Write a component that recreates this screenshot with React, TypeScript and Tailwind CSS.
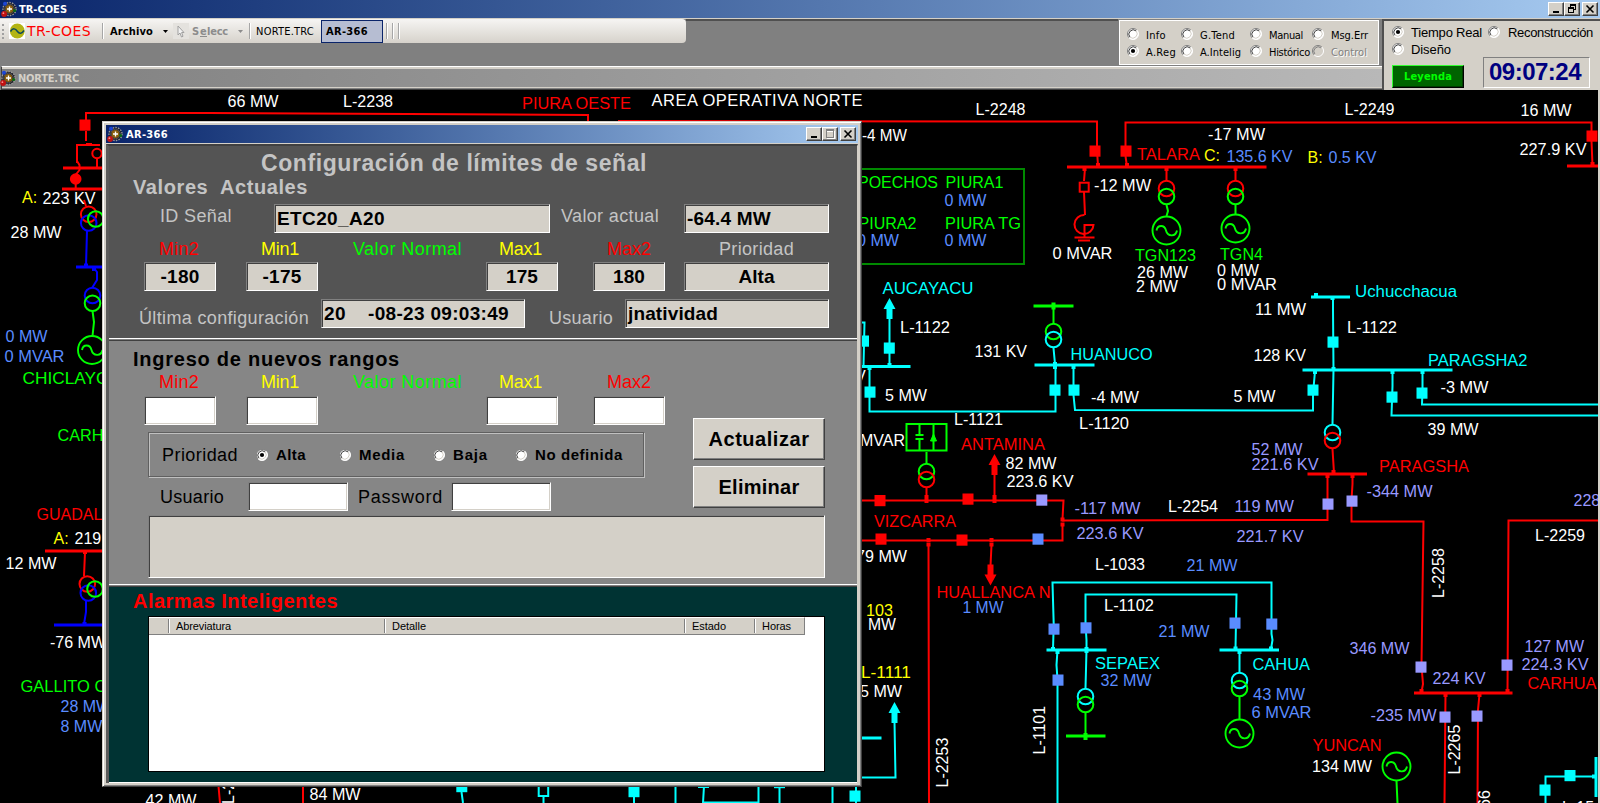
import { useLayoutEffect, useRef, type ReactNode } from "react";

const RED = "#ff0000";
const LIME = "#00ff00";
const CYAN = "#00ffff";
const BLUE = "#0000ff";
const SKY = "#5a8cff";
const LILAC = "#9999ff";
const WHITE = "#ffffff";
const YELLOW = "#ffff00";

/* Text whose tracking is computed so that it fills a given width. */
function Fit({ w, text, className = "" }: { w: number; text: string; className?: string }) {
  const ref = useRef<HTMLSpanElement>(null);
  useLayoutEffect(() => {
    const el = ref.current;
    if (!el) return;
    el.style.letterSpacing = "0px";
    const natural = el.getBoundingClientRect().width;
    el.style.letterSpacing = `${(w - natural) / text.length}px`;
  }, [w, text]);
  return (
    <span ref={ref} className={`inline-block shrink-0 whitespace-pre ${className}`}>
      {text}
    </span>
  );
}

function AppIcon() {
  return (
    <svg width="16" height="16" viewBox="0 0 16 16" className="shrink-0">
      <circle cx="8.5" cy="8" r="6.5" fill="#1c1c24" stroke="#9a9a9a" strokeWidth="1.4" strokeDasharray="1.5 1.2" />
      <circle cx="8.5" cy="8" r="4.8" fill="none" stroke="#5c5c66" strokeWidth="0.8" />
      <circle cx="4" cy="2.8" r="2" fill="#1c46d8" />
      <circle cx="13.6" cy="9.5" r="1.6" fill="#0b6b12" />
      <circle cx="8.4" cy="8" r="4" fill="#8a6010" />
      <path d="M8.5 5.5v5M6 8h5" stroke="#fff" strokeWidth="1.3" />
      <circle cx="3.1" cy="13" r="2.9" fill="#c01212" />
      <circle cx="2.4" cy="12.2" r="0.9" fill="#ff8a8a" />
    </svg>
  );
}

function WinButton({ kind }: { kind: "min" | "max" | "restore" | "close" }) {
  return (
    <span className="flex h-[14px] w-4 items-center justify-center border border-t-white border-l-white border-r-[#404040] border-b-[#404040] bg-[#d4d0c8] shadow-[inset_-1px_-1px_0_#808080]">
      <svg width="12" height="10" viewBox="0 0 12 10" shapeRendering="crispEdges" fill="none">
        {kind === "min" && <path d="M3 8h6" stroke="#000" strokeWidth="2" />}
        {kind === "max" && (
          <>
            <path d="M3 2.5h8M10.5 2v7M3 9.5h8" stroke="#fff" />
            <path d="M2 1h8" stroke="#808080" strokeWidth="2" />
            <path d="M2.500 1v7M9.500 1v7M2 8.500h8" stroke="#808080" />
          </>
        )}
        {kind === "restore" && (
          <>
            <path d="M4 1h6" stroke="#000" strokeWidth="2" />
            <path d="M4.500 0v3M9.500 0v6M8 5.500h2" stroke="#000" />
            <path d="M2 4h6" stroke="#000" strokeWidth="2" />
            <path d="M2.500 3v6M7.500 3v6M2 8.500h6" stroke="#000" />
          </>
        )}
        {kind === "close" && <path d="M2.500 1.500l7 7M9.500 1.500l-7 7" stroke="#000" strokeWidth="1.600" shapeRendering="auto" />}
      </svg>
    </span>
  );
}

function Radio({ on = false, off = false }: { on?: boolean; off?: boolean }) {
  return (
    <svg width="12" height="12" viewBox="0 0 12 12" className="shrink-0">
      <circle cx="6" cy="6" r="5.500" fill={off ? "#d4d0c8" : "#fff"} />
      <path d="M2.100 9.900A5.500 5.500 0 0 1 9.900 2.100" fill="none" stroke="#808080" />
      <path d="M2.900 9.100A4.400 4.400 0 0 1 9.100 2.900" fill="none" stroke={off ? "#808080" : "#404040"} />
      <path d="M9.900 2.100A5.500 5.500 0 0 1 2.100 9.900" fill="none" stroke="#fff" />
      <path d="M9.100 2.900A4.400 4.400 0 0 1 2.900 9.100" fill="none" stroke="#d4d0c8" />
      {on && <circle cx="6" cy="6" r="2.100" fill="#000" />}
    </svg>
  );
}

const sunken =
  "border border-t-[#808080] border-l-[#808080] border-r-white border-b-white shadow-[inset_1px_1px_0_#404040,inset_-1px_-1px_0_#d4d0c8]";

function Field({ className = "", children }: { className?: string; children?: ReactNode }) {
  return (
    <div className={`flex shrink-0 items-center pb-px text-[19px] leading-none font-bold text-black ${sunken} ${className}`}>
      {children}
    </div>
  );
}

function RaisedButton({ text, w }: { text: string; w: number }) {
  return (
    <button className="flex h-[42px] w-[132px] items-center justify-center border border-t-white border-l-white border-r-[#404040] border-b-[#404040] bg-[#d4d0c8] text-xl leading-none font-bold text-black shadow-[inset_-1px_-1px_0_#808080]">
      <Fit w={w} text={text} />
    </button>
  );
}

/* ---------- one-line diagram ---------- */

type Label = [x: number, y: number, text: string, color: string, width?: number];

const labels: Label[] = [
  [227.500, 107, "66 MW", WHITE, 51],
  [343, 107, "L-2238", WHITE, 50],
  [522, 109, "PIURA OESTE", RED, 109],
  [22, 203, "A:", YELLOW],
  [42.500, 203.500, "223 KV", WHITE, 53],
  [10.500, 238, "28 MW", WHITE, 51],
  [5.500, 342, "0 MW", SKY, 42],
  [4.500, 362, "0 MVAR", SKY, 60],
  [22.500, 384, "CHICLAYO", LIME, 87],
  [57.500, 440.500, "CARH", LIME, 46],
  [36.500, 520, "GUADAL", RED, 66],
  [53.500, 543.500, "A:", YELLOW],
  [74.500, 544, "219", WHITE],
  [5.500, 569, "12 MW", WHITE, 51],
  [50, 648, "-76 MW", WHITE],
  [20.500, 691.500, "GALLITO C", LIME, 86],
  [60.500, 712, "28 MW", SKY],
  [60.500, 731.500, "8 MW", SKY],
  [145.500, 806, "42 MW", WHITE, 51],
  [309.500, 800, "84 MW", WHITE, 51],
  [975.500, 114.500, "L-2248", WHITE, 50],
  [862, 141, "-4 MW", WHITE, 45],
  [858, 188, "POECHOS", LIME, 80],
  [945.500, 188, "PIURA1", LIME, 58],
  [944.500, 206, "0 MW", SKY, 42],
  [858.500, 229, "PIURA2", LIME, 58],
  [945, 229, "PIURA TG", LIME, 76],
  [857, 246, "0 MW", SKY, 42],
  [944.500, 246, "0 MW", SKY, 42],
  [1137, 160, "TALARA", RED, 63],
  [1204, 160.500, "C:", YELLOW],
  [1208, 140, "-17 MW", WHITE, 57],
  [1344.500, 115, "L-2249", WHITE, 50],
  [1520.500, 116, "16 MW", WHITE, 51],
  [1226.500, 161.500, "135.6 KV", SKY, 66],
  [1307.500, 162.500, "B:", YELLOW],
  [1328.500, 163, "0.5 KV", SKY, 48],
  [1519.500, 155, "227.9 KV", WHITE, 67],
  [1094, 191, "-12 MW", WHITE, 57],
  [1052.500, 259, "0 MVAR", WHITE, 60],
  [1135, 261, "TGN123", LIME, 61],
  [1137, 278, "26 MW", WHITE, 51],
  [1136, 291.500, "2 MW", WHITE, 42],
  [1220, 260, "TGN4", LIME, 43],
  [1217, 276, "0 MW", WHITE, 42],
  [1217, 290, "0 MVAR", WHITE, 60],
  [882.500, 294, "AUCAYACU", CYAN, 91],
  [900, 333, "L-1122", WHITE, 50],
  [974.500, 357, "131 KV", WHITE, 52.500],
  [1070.500, 360, "HUANUCO", CYAN, 82],
  [855, 382, "V", WHITE],
  [885, 401, "5 MW", WHITE, 42],
  [1091, 403, "-4 MW", WHITE, 48],
  [954, 425, "L-1121", WHITE, 49],
  [1079, 429, "L-1120", WHITE, 50],
  [860, 446, "MVAR", WHITE, 45],
  [961, 449.500, "ANTAMINA", RED, 84],
  [1355, 296.500, "Uchucchacua", CYAN, 102],
  [1255, 315, "11 MW", WHITE, 51],
  [1347, 333, "L-1122", WHITE, 50],
  [1253.500, 361, "128 KV", WHITE, 52.500],
  [1428, 366, "PARAGSHA2", CYAN, 99.500],
  [1233.500, 402, "5 MW", WHITE, 42],
  [1440.500, 393, "-3 MW", WHITE, 48],
  [1427.500, 435, "39 MW", WHITE, 51],
  [1005.500, 468.500, "82 MW", WHITE, 51],
  [1006.500, 486.500, "223.6 KV", WHITE, 67],
  [874, 527, "VIZCARRA", RED, 82],
  [1074.500, 514, "-117 MW", LILAC, 66],
  [1168, 511.500, "L-2254", WHITE, 50],
  [1076.500, 538.500, "223.6 KV", LILAC, 67],
  [856, 562, "79 MW", WHITE, 51],
  [936.500, 598, "HUALLANCA N", RED, 114],
  [962.500, 613, "1 MW", SKY, 41],
  [1095, 569.500, "L-1033", WHITE, 50],
  [1186.500, 571, "21 MW", SKY, 51],
  [1104, 611, "L-1102", WHITE, 50],
  [1158.500, 637, "21 MW", SKY, 51],
  [866, 616, "103", YELLOW, 27],
  [868, 630, "MW", WHITE, 28],
  [861, 678, "L-1111", YELLOW, 50],
  [860, 697, "5 MW", WHITE, 42],
  [1095, 669, "SEPAEX", CYAN, 65],
  [1100.500, 686, "32 MW", SKY, 51],
  [1251.500, 455, "52 MW", LILAC, 51],
  [1251.500, 469.500, "221.6 KV", LILAC, 67],
  [1379, 472, "PARAGSHA", RED, 90],
  [1366.500, 497, "-344 MW", LILAC, 66],
  [1234.500, 512, "119 MW", LILAC, 59.500],
  [1236.500, 542, "221.7 KV", LILAC, 67],
  [1573.500, 505.500, "228", LILAC],
  [1535, 540.500, "L-2259", WHITE, 50],
  [1349.500, 654, "346 MW", LILAC, 60],
  [1524.500, 652, "127 MW", LILAC, 59.500],
  [1521.500, 669.500, "224.3 KV", LILAC, 67],
  [1432.500, 684, "224 KV", LILAC, 53],
  [1527.500, 689, "CARHUA", RED, 69],
  [1252.500, 670, "CAHUA", CYAN, 57.500],
  [1253, 700, "43 MW", SKY, 52],
  [1251.500, 718, "6 MVAR", SKY, 60],
  [1370.500, 721, "-235 MW", LILAC, 66],
  [1312.500, 751, "YUNCAN", RED, 69],
  [1312, 772, "134 MW", WHITE, 60],
  [1562, 813, "L-15", WHITE],
];

const verticalLabels: [number, number, string][] = [
  [234, 804, "L-22"],
  [947.500, 787.500, "L-2253"],
  [1045, 754.500, "L-1101"],
  [1444, 598, "L-2258"],
  [1459.500, 774.500, "L-2265"],
  [1490, 840, "L-2266"],
];

const wires: [string, string][] = [
  [
    RED,
    "M86 120V113L208 113L588 115V122 M86 131V141 M77 163V145H100 M86 144H92 M77 161L79.500 165V170L75.500 175 M97 158V168 M75.700 184V188 M84 200L86 206 " +
      "M85 552L84 576 M218.500 786L220 803 M303 786V803 M618 121L1097 121.500V150L1098 166 M1125.500 150V122.500H1591.500V141L1592.500 165 M1125.500 156L1127 167 " +
      "M1085 168L1084 181 M1084 192L1085 215 M1084.500 215A9.500 9.500 0 1 0 1093.500 225H1084.500V237 M1074.500 237.500H1094.500 M1078 240.500H1090 " +
      "M1166.500 168V180 M1235.500 168V180 M926.500 488V497 M862 500.500H1063.500L1062.500 519 M994.500 474V497 M862 540.500H1062.500V525 " +
      "M1062 520.500L1327.500 520V476 M991.500 545L990.500 566 M928.500 545L929 803 M1332.500 449L1334 473 M1352.500 475V484L1351.500 500V521.500H1423.500L1421.500 664 " +
      "M1422 672L1423 684L1421.500 692 M1598 520.500H1508.500L1507.500 692 M1445.500 694L1444.500 803 M1479.500 694L1478 710L1477.500 803",
  ],
  [BLUE, "M87 231L86 266 M94 268L97 272V280L92 288 M86 601V612L84 624"],
  [
    LIME,
    "M92.500 311L94 322L92.500 336 M1166.500 205L1168 211L1166.500 216 M1235.500 205V215 M1053.500 306V323 M926.500 452V463 M1085.500 713V736 M1239.500 697V719 M1396.500 781L1397.500 803",
  ],
  [
    CYAN,
    "M461.500 792L463 803 M543.500 797V803 M634 797V803 M675.500 786V803 M704 786L703 803 M703 802.500H758.500 M758.500 786V803 M779.500 788V803 M832.500 786V803 M856 786V803 M698 787H709 " +
      "M889.500 318V365 M862 322.500H864.500L863.500 366 M869.500 368V411.500H1055.500V366 M1053.500 348L1055 364 M1073.500 366V395L1075 410L1313 410.500V394L1315 371 " +
      "M1333 298V310L1333.500 370L1332.500 424 M1392.500 371V386L1391.500 415.500H1598 M1422.500 371V388L1422 404.500H1598 " +
      "M894.500 722L895.500 777.500H862 M1053 650L1053.700 624L1052.500 582.500H1271.500V634L1272.500 640L1271 649 M1086.500 650V640L1085.500 624V594.500H1236.500L1235.500 649 " +
      "M1057.500 650L1056.500 665L1057.500 680V803 M1086.500 650L1085.500 688 M1239.500 651V672 M1596 776.500H1545.500V803",
  ],
];

const buses: [string, string][] = [
  [RED, "M63 168H102 M62 189H102 M45 551H102 M1067 167H1266.500 M1567 166H1598 M1307.500 474H1367 M1414 693H1512.500"],
  [BLUE, "M76 267H102 M54 625H102"],
  [LIME, "M1033.500 306H1073.500 M1066 736H1105.500"],
  [
    CYAN,
    "M862 366.500H910.500 M1034.500 365H1094.500 M1302.500 370H1452.500 M1311 297H1350 M862 738H881.500 M1046.500 650H1106.500 M1219.500 650H1279 M1596 757V797",
  ],
];

const nodes: [string, number, number][] = [
  [RED, 85, 552], [RED, 1098, 165], [RED, 1127, 165], [RED, 1084.500, 169], [RED, 1166.500, 169], [RED, 1235.500, 169],
  [RED, 1592.500, 164], [RED, 926.500, 497], [RED, 926.500, 501], [RED, 994.500, 497], [RED, 994.500, 501],
  [RED, 928.500, 540], [RED, 928.500, 544.500], [RED, 991.500, 540], [RED, 991.500, 544.500], [RED, 1062.500, 519.500], [RED, 1062.500, 524.500],
  [RED, 1333.500, 472], [RED, 1327.500, 476], [RED, 1352.500, 476], [RED, 1421.500, 691], [RED, 1507.500, 691], [RED, 1445.500, 695], [RED, 1479.500, 695],
  [CYAN, 889.500, 365], [CYAN, 869.500, 368], [CYAN, 1055, 364], [CYAN, 1055, 367], [CYAN, 1073.500, 367], [CYAN, 1316, 295],
  [CYAN, 1332.500, 298], [CYAN, 1333.500, 369], [CYAN, 1315, 372], [CYAN, 1392.500, 372], [CYAN, 1422.500, 372],
  [CYAN, 1053, 649], [CYAN, 1086.500, 649], [CYAN, 1086.500, 651], [CYAN, 1057.500, 652], [CYAN, 1235.500, 648.500], [CYAN, 1271, 648.500], [CYAN, 1239.500, 652], [CYAN, 1594, 776.500],
  [LIME, 1053.500, 304.500], [LIME, 1053.500, 307.500], [LIME, 1085.500, 735], [LIME, 1085.500, 738],
  [BLUE, 86, 265.500], [BLUE, 84.500, 624], [BLUE, 94, 269],
];

const breakers: [string, number, number][] = [
  [RED, 79.500, 119.500], [RED, 1089.500, 145.500], [RED, 1120.500, 145.500], [RED, 1586.500, 130.500],
  [RED, 874.500, 495], [RED, 962.500, 493.500], [LILAC, 1036.300, 494.500], [RED, 875.500, 533.500], [RED, 956.500, 534.500], [SKY, 1032.500, 533.500],
  [CYAN, 456.300, 781], [CYAN, 628.500, 786], [CYAN, 774, 777], [CYAN, 849.500, 790.500],
  [CYAN, 883.800, 342.500], [CYAN, 858, 335.500], [CYAN, 864.500, 386.500], [CYAN, 1049.500, 384.500], [CYAN, 1068.500, 384.500],
  [CYAN, 1327.500, 336.500], [CYAN, 1307.500, 384.500], [CYAN, 1386.500, 391.500], [CYAN, 1416.500, 387.500],
  [SKY, 1048.500, 623.500], [SKY, 1080.500, 622.300], [SKY, 1052.500, 674.500], [SKY, 1229.500, 617.500], [SKY, 1266.300, 618.500],
  [LILAC, 1322.500, 498.500], [LILAC, 1346.500, 495.500], [LILAC, 1415.500, 661.500], [LILAC, 1501.500, 659.500],
  [LILAC, 1439.500, 711.500], [LILAC, 1471.500, 710.500], [CYAN, 1564.500, 770], [CYAN, 1539.500, 784.500],
];

const rings: [string, number, number][] = [
  [RED, 88.700, 214.300], [BLUE, 88.700, 223], [LIME, 95.700, 219],
  [BLUE, 92.500, 295.500], [LIME, 92.500, 303.300],
  [RED, 87.300, 584], [BLUE, 88.300, 593], [LIME, 95, 589],
  [RED, 1166.500, 188.500], [LIME, 1166.500, 196.500], [RED, 1235.500, 188.500], [LIME, 1235.500, 196.500],
  [LIME, 1053.500, 331.500], [CYAN, 1053.500, 339.500], [CYAN, 1332.500, 432.500], [RED, 1332.500, 440.500],
  [LIME, 926.500, 471.500], [RED, 926.500, 479.500], [CYAN, 1085.500, 696.500], [LIME, 1085.500, 704.500],
  [CYAN, 1239.500, 680.500], [LIME, 1239.500, 688.500],
];

const generators: [number, number][] = [
  [92, 350], [1166.500, 230.500], [1235.500, 228.500], [1239.500, 733.500], [1396.500, 766.500],
];

const arrows: [string, number, number, 1 | -1][] = [
  [CYAN, 889.500, 298, 1], [RED, 994.500, 454, 1], [RED, 990.500, 585.500, -1], [CYAN, 894.500, 702, 1],
];

function Diagram() {
  return (
    <svg width="1598" height="713" viewBox="0 90 1598 713" className="block shrink-0 bg-black [font-family:'Liberation_Sans',Arial,sans-serif]">
      <rect x="840" y="169" width="184" height="95" fill="none" stroke="#008a00" strokeWidth="2" />
      {wires.map(([c, d]) => (
        <path key={c} d={d} fill="none" stroke={c} strokeWidth="2" />
      ))}
      {buses.map(([c, d]) => (
        <path key={c} d={d} fill="none" stroke={c} strokeWidth="3" />
      ))}
      {nodes.map(([c, x, y], i) => (
        <rect key={i} x={x - 2} y={y - 2} width="4" height="4" fill={c} />
      ))}
      {breakers.map(([c, x, y], i) => (
        <rect key={i} x={x} y={y} width="11" height="11.200" fill={c} />
      ))}
      <rect x="1079.700" y="182.700" width="9" height="9" fill="#000" stroke={RED} strokeWidth="2" />
      <rect x="538.700" y="783" width="9.500" height="13" fill="#000" stroke={CYAN} strokeWidth="2" />
      {rings.map(([c, x, y], i) => (
        <circle key={i} cx={x} cy={y} r="7.800" fill="none" stroke={c} strokeWidth="2" />
      ))}
      <circle cx="97" cy="153.500" r="4.700" fill="none" stroke={RED} strokeWidth="2" />
      <circle cx="75.700" cy="179" r="5.800" fill={RED} />
      {generators.map(([x, y], i) => (
        <g key={i} fill="none" stroke={LIME} strokeWidth="1.900">
          <circle cx={x} cy={y} r="14" />
          <path d={`M${x - 10} ${y}C${x - 9} ${y - 6} ${x - 2} ${y - 6} ${x - 0.500} ${y}S${x + 9} ${y + 7} ${x + 10.500} ${y}`} />
        </g>
      ))}
      {arrows.map(([c, x, y, s], i) => (
        <path key={i} fill={c} d={`M${x} ${y}l6 ${11 * s}h-3v${10 * s}h-6v${-10 * s}h-3z`} />
      ))}
      <g stroke={LIME} strokeWidth="2" fill="none">
        <rect x="906.500" y="424" width="40" height="26.500" />
        <path d="M919.500 424V435M919.500 439.500V451M915.500 435H923.500M915.500 439H923.500M933.500 424V451" />
        <path d="M933.500 434L936.500 441H930.500Z" fill={LIME} strokeWidth="1" />
      </g>
      <text x="651.500" y="105.500" fontSize="16.500" fill={WHITE} textLength="211">
        AREA OPERATIVA NORTE
      </text>
      {labels.map(([x, y, t, c, w], i) => (
        <text key={i} x={x} y={y} fontSize="16" fill={c} textLength={w} lengthAdjust="spacingAndGlyphs">
          {t}
        </text>
      ))}
      {verticalLabels.map(([x, y, t], i) => (
        <text key={i} transform={`translate(${x} ${y}) rotate(-90)`} fontSize="16" fill={WHITE}>
          {t}
        </text>
      ))}
    </svg>
  );
}

/* ---------- header ---------- */

const tahoma = "[font-family:'DejaVu_Sans_Condensed','DejaVu_Sans',sans-serif]";

function Separator({ className = "" }: { className?: string }) {
  return <span className={`h-4 w-[2px] shrink-0 border-l border-[#a6a6a6] bg-white ${className}`} />;
}

function Toolbar() {
  return (
    <div className="flex h-6 w-[686px] items-center rounded-r bg-gradient-to-b from-[#f6f5f3] to-[#d6d2cb] text-[11px] leading-none text-black">
      <span className="ml-[2px] h-[15px] w-[2px] border-l-2 border-dotted border-[#a0a0a0]" />
      <svg width="16" height="16" viewBox="0 0 16 16" className="ml-[5px] shrink-0 bg-white">
        <circle cx="8.300" cy="8" r="7.400" fill="#b3b414" />
        <path d="M1.500 8.500C4 4.500 6.500 5.500 8.500 8.500S13 10.500 15 7.500" fill="none" stroke="#0d4a5a" strokeWidth="1.500" />
      </svg>
      <Fit w={64} text="TR-COES" className="ml-[2px] text-[14px] text-[#ff0000] [font-family:'DejaVu_Sans',sans-serif]" />
      <Separator className="ml-[11px]" />
      <Fit w={43} text="Archivo" className="ml-[6px] font-bold" />
      <svg width="5" height="3" className="ml-[10px] shrink-0"><path d="M0 0h5L2.500 3z" fill="#000" /></svg>
      <span className="ml-[5px] flex h-4 w-4 shrink-0 items-center justify-center bg-[#e4e2de]">
        <svg width="8" height="13" viewBox="0 0 8 13"><path d="M1 1v9l2-2 1.500 4 1.500-.7L4.600 7.500H7z" fill="#f2f2f2" stroke="#a0a0a0" /></svg>
      </span>
      <span className="ml-[3px] flex w-9 shrink-0 font-bold text-[#8c8c8c]">
        <Fit w={8} text="S" /><Fit w={7} text="e" className="underline" /><Fit w={21} text="lecc" />
      </span>
      <svg width="5" height="3" className="ml-[10px] shrink-0"><path d="M0 0h5L2.500 3z" fill="#8c8c8c" /></svg>
      <Separator className="ml-[6px]" />
      <Fit w={58} text="NORTE.TRC" className="ml-[5px]" />
      <span className="ml-[7px] flex h-[23px] w-[62px] items-center border border-[#0a246a] bg-[#b6bdd2] pl-1 font-bold">
        <Fit w={42} text="AR-366" />
      </span>
      <Separator className="ml-[3px]" />
      <Separator className="ml-1" />
      <Separator className="ml-1" />
    </div>
  );
}

type Option = { text: string; w: number; cell: string; on?: boolean; off?: boolean };

const modeOptions: Option[][] = [
  [
    { text: "Info", w: 20, cell: "w-[54px]" },
    { text: "G.Tend", w: 35, cell: "w-[69px]" },
    { text: "Manual", w: 34, cell: "w-[62px]" },
    { text: "Msg.Err", w: 37, cell: "w-14" },
  ],
  [
    { text: "A.Reg", w: 30, cell: "w-[54px]", on: true },
    { text: "A.Intelig", w: 41, cell: "w-[69px]" },
    { text: "Histórico", w: 41, cell: "w-[62px]" },
    { text: "Control", w: 36, cell: "w-14", off: true },
  ],
];

function ModePanel() {
  return (
    <div className="mr-[2px] flex h-[47px] w-[262px] flex-col gap-[5px] border border-[#808080] bg-[#d4d0c8] pt-[8px] pl-[8px] text-[11px] leading-none text-black shadow-[inset_1px_1px_0_#fff,inset_-1px_-1px_0_#fff]">
      {modeOptions.map((row, i) => (
        <div key={i} className="flex">
          {row.map((o) => (
            <label key={o.text} className={`flex h-3 shrink-0 items-center gap-[7px] ${o.cell}`}>
              <Radio on={o.on} off={o.off} />
              <Fit w={o.w} text={o.text} className={o.off ? "pt-[2px] text-[#808080] [text-shadow:1px_1px_0_#fff]" : "pt-[2px]"} />
            </label>
          ))}
        </div>
      ))}
    </div>
  );
}

function ClockPanel() {
  return (
    <div className="flex h-[72px] w-[218px] shrink-0 flex-col border-t-[2px] border-l-[2px] border-b border-t-[#505050] border-l-[#505050] border-b-white bg-[#d4d0c8] pl-2 text-[13px] leading-none text-black [font-family:'Liberation_Sans',Arial,sans-serif]">
      <div className="mt-[5px] flex h-3 items-center">
        <Radio on />
        <Fit w={71} text="Tiempo Real" className="ml-[7px]" />
        <span className="ml-[6px] flex"><Radio /></span>
        <Fit w={85} text="Reconstrucción" className="ml-2" />
      </div>
      <div className="mt-[5px] flex h-3 items-center">
        <Radio />
        <Fit w={40} text="Diseño" className="ml-[7px]" />
      </div>
      <div className="mt-[2px] flex items-end">
        <button className={`flex h-[23px] w-[72px] items-center justify-center border border-t-[#33ff33] border-l-[#33ff33] border-r-black border-b-black bg-[#006400] text-[11px] leading-none font-bold text-[#00ff00] shadow-[inset_-1px_-1px_0_#003c00] ${tahoma}`}>
          <Fit w={48} text="Leyenda" />
        </button>
        <div className="ml-[19px] flex h-[31px] w-[107px] items-center border border-t-[#808080] border-l-[#808080] border-r-white border-b-white pb-[2px] pl-[5px] text-2xl leading-none font-bold text-[#000080]">
          <Fit w={92} text="09:07:24" />
        </div>
      </div>
    </div>
  );
}

/* ---------- dialog ---------- */

function LimitLabels({ priority = false }: { priority?: boolean }) {
  return (
    <div className="flex h-[18px] items-center pl-[50px] text-lg leading-none">
      <Fit w={40} text="Min2" className="text-[#ff0000]" />
      <Fit w={38} text="Min1" className="ml-[62px] text-[#ffff00]" />
      <Fit w={109} text="Valor Normal" className="ml-[54px] text-[#00ff00]" />
      <Fit w={43} text="Max1" className="ml-[37px] text-[#ffff00]" />
      <Fit w={44} text="Max2" className="ml-[65px] text-[#ff0000]" />
      {priority && <Fit w={75} text="Prioridad" className="ml-[68px]" />}
    </div>
  );
}

const centered = "h-[29px] justify-center bg-[#d4d0c8]";

function CurrentValues() {
  return (
    <section className="h-[192px] bg-[#545454] text-lg leading-none text-[#c4c4c4]">
      <div className="flex h-[34px] items-center pl-[152px] text-[23px] font-bold">
        <Fit w={386} text="Configuración de límites de señal" />
      </div>
      <div className="flex h-4 items-center pb-[2px] pl-6 text-xl leading-none font-bold">
        <Fit w={175} text="Valores  Actuales" />
      </div>
      <div className="mt-2 flex h-[29px] pl-[51px]">
        <Fit w={72} text="ID Señal" className="pt-[3px]" />
        <Field className="ml-[42px] h-[29px] w-[276px] bg-[#d4d0c8] pl-[2px]"><Fit w={108} text="ETC20_A20" /></Field>
        <Fit w={98} text="Valor actual" className="ml-[11px] pt-[3px]" />
        <Field className="ml-[25px] h-[29px] w-[145px] bg-[#d4d0c8] pl-[2px]"><Fit w={84} text="-64.4 MW" /></Field>
      </div>
      <div className="mt-[7px]"><LimitLabels priority /></div>
      <div className="mt-1 flex pl-[35px]">
        <Field className={`w-[72px] ${centered}`}><Fit w={39} text="-180" /></Field>
        <Field className={`ml-[30px] w-[72px] ${centered}`}><Fit w={39} text="-175" /></Field>
        <Field className={`ml-[168px] w-[72px] ${centered}`}><Fit w={32} text="175" /></Field>
        <Field className={`ml-[35px] w-[72px] ${centered}`}><Fit w={32} text="180" /></Field>
        <Field className={`ml-[19px] w-[145px] ${centered}`}><Fit w={36} text="Alta" /></Field>
      </div>
      <div className="mt-2 flex pl-[30px]">
        <Fit w={170} text="Última configuración" className="pt-[10px]" />
        <Field className="ml-3 h-[29px] w-[204px] bg-[#d4d0c8] pl-[2px]">
          <Fit w={22} text="20" /><Fit w={141} text="-08-23 09:03:49" className="ml-[22px]" />
        </Field>
        <Fit w={64} text="Usuario" className="ml-6 pt-[10px]" />
        <Field className="ml-3 h-[29px] w-[204px] bg-[#d4d0c8] pl-[2px]"><Fit w={90} text="jnatividad" /></Field>
      </div>
    </section>
  );
}

const input = "h-[29px] shrink-0 bg-white " + sunken;

function NewRanges() {
  return (
    <section className="h-[243px] bg-[#868686] text-lg leading-none text-black">
      <div className="flex h-8 items-center pt-[3px] pl-6 text-xl leading-none font-bold">
        <Fit w={267} text="Ingreso de nuevos rangos" />
      </div>
      <LimitLabels />
      <div className="mt-[5px] flex pl-[35px]">
        <div className={`w-[72px] ${input}`} />
        <div className={`ml-[30px] w-[72px] ${input}`} />
        <div className={`ml-[168px] w-[72px] ${input}`} />
        <div className={`ml-[35px] w-[72px] ${input}`} />
      </div>
      <div className="-mt-[7px] flex">
        <div className="w-[584px] pt-[14px] pl-[39px]">
          <div className="flex h-[45px] w-[496px] items-center border border-[#606060] pl-[13px] text-[15px] leading-none font-bold shadow-[1px_1px_0_#c0c0c0,inset_1px_1px_0_#c0c0c0]">
            <Fit w={76} text="Prioridad" className="pt-px text-lg leading-none font-normal" />
            <span className="ml-[18px] flex"><Radio on /></span>
            <Fit w={30} text="Alta" className="ml-2" />
            <span className="ml-[33px] flex"><Radio /></span>
            <Fit w={46} text="Media" className="ml-2" />
            <span className="ml-[28px] flex"><Radio /></span>
            <Fit w={35} text="Baja" className="ml-2" />
            <span className="ml-[27px] flex"><Radio /></span>
            <Fit w={88} text="No definida" className="ml-2" />
          </div>
          <div className="mt-[5px] flex h-[29px] items-center pl-3">
            <Fit w={64} text="Usuario" />
            <div className={`ml-6 w-[100px] ${input}`} />
            <Fit w={85} text="Password" className="ml-[10px]" />
            <div className={`ml-2 w-[100px] ${input}`} />
          </div>
        </div>
        <div className="flex flex-col gap-[6px]">
          <RaisedButton text="Actualizar" w={101} />
          <RaisedButton text="Eliminar" w={81} />
        </div>
      </div>
      <div className={`mt-1 ml-[39px] h-[63px] w-[677px] bg-[#d4d0c8] ${sunken}`} />
    </section>
  );
}

function Alarms() {
  return (
    <section className="h-[195px] bg-[#003333]">
      <div className="flex h-[29px] items-center pb-[2px] pl-6 text-xl leading-none font-bold text-[#ff0000]">
        <Fit w={205} text="Alarmas Inteligentes" />
      </div>
      <div className="ml-[39px] h-[156px] w-[677px] border border-black bg-white">
        <div className="flex h-[18px] w-[656px] items-center border-r border-b border-t border-[#808080] border-t-white bg-[#d4d0c8] text-[11px] leading-none text-black">
          <span className="h-[14px] w-5 border-r border-[#808080]" />
          <span className="flex h-[14px] w-[216px] items-center border-r border-l border-r-[#808080] border-l-white pt-px pl-[6px]"><Fit w={55} text="Abreviatura" /></span>
          <span className="flex h-[14px] w-[300px] items-center border-r border-l border-r-[#808080] border-l-white pt-px pl-[6px]"><Fit w={34} text="Detalle" /></span>
          <span className="flex h-[14px] w-[70px] items-center border-r border-l border-r-[#808080] border-l-white pt-px pl-[6px]"><Fit w={34} text="Estado" /></span>
          <span className="flex h-[14px] flex-1 items-center border-l border-white pt-px pl-[6px]"><Fit w={29} text="Horas" /></span>
        </div>
      </div>
    </section>
  );
}

function Dialog() {
  return (
    <div className="absolute top-[121px] left-[102px] flex h-[666px] w-[760px] flex-col border border-t-[#d4d0c8] border-l-[#d4d0c8] border-r-[#404040] border-b-[#404040] bg-[#d4d0c8] p-[3px] shadow-[inset_1px_1px_0_#fff,inset_-1px_-1px_0_#808080] [font-family:'Liberation_Sans',Arial,sans-serif]">
      <div className={`flex h-[18px] items-center bg-gradient-to-r from-[#0a246a] to-[#a6caf0] pr-[2px] pl-px text-[11px] leading-none font-bold text-white ${tahoma}`}>
        <AppIcon />
        <Fit w={42} text="AR-366" className="ml-[3px]" />
        <span className="flex-1" />
        <WinButton kind="min" />
        <WinButton kind="max" />
        <span className="ml-[2px] flex"><WinButton kind="close" /></span>
      </div>
      <div className="mt-px flex-1 border-t-2 border-r border-l-[3px] border-[#404040] border-r-[#d4d0c8] border-l-[#5a5a5a] bg-white">
        <CurrentValues />
        <div className="h-[3px] border-t border-b border-t-white border-b-[#404040] bg-[#808080]" />
        <NewRanges />
        <div className="h-[3px] border-t border-b border-t-white border-b-[#404040] bg-[#808080]" />
        <Alarms />
      </div>
    </div>
  );
}

export default function App() {
  return (
    <div className={`relative flex h-[803px] w-[1600px] flex-col overflow-hidden bg-[#808080] ${tahoma}`}>
      <div className="flex h-[18px] shrink-0 items-center bg-gradient-to-r from-[#0a246a] to-[#a6caf0] pr-[2px] pl-px text-[11px] leading-none font-bold text-white">
        <AppIcon />
        <Fit w={48} text="TR-COES" className="ml-[2px]" />
        <span className="flex-1" />
        <WinButton kind="min" />
        <WinButton kind="restore" />
        <span className="ml-[2px] flex"><WinButton kind="close" /></span>
      </div>
      <div className="flex h-[72px] shrink-0 border-t border-[#d4d0c8]">
        <div className="flex w-[1382px] flex-col">
          <div className="flex h-[47px] justify-between">
            <Toolbar />
            <div className="flex-1 border-t-[2px] border-[#505050]" />
            <ModePanel />
          </div>
          <div className="ml-px flex h-6 flex-col border-t border-l border-t-white border-l-[#404040] bg-[#d4d0c8]">
            <div className="mt-[2px] flex h-[18px] items-center bg-gradient-to-r from-[#808080] to-[#b8b8b8] text-[11px] leading-none font-bold text-[#d4d0c8]">
              <span className="-ml-[2px] flex"><AppIcon /></span>
              <Fit w={61} text="NORTE.TRC" className="ml-[2px]" />
            </div>
            <div className="mt-px h-[2px] border-b border-[#404040] bg-[#808080]" />
          </div>
        </div>
        <ClockPanel />
      </div>
      <div className="flex">
        <Diagram />
        <div className="w-[2px] bg-[#d4d0c8]" />
      </div>
      <Dialog />
    </div>
  );
}
